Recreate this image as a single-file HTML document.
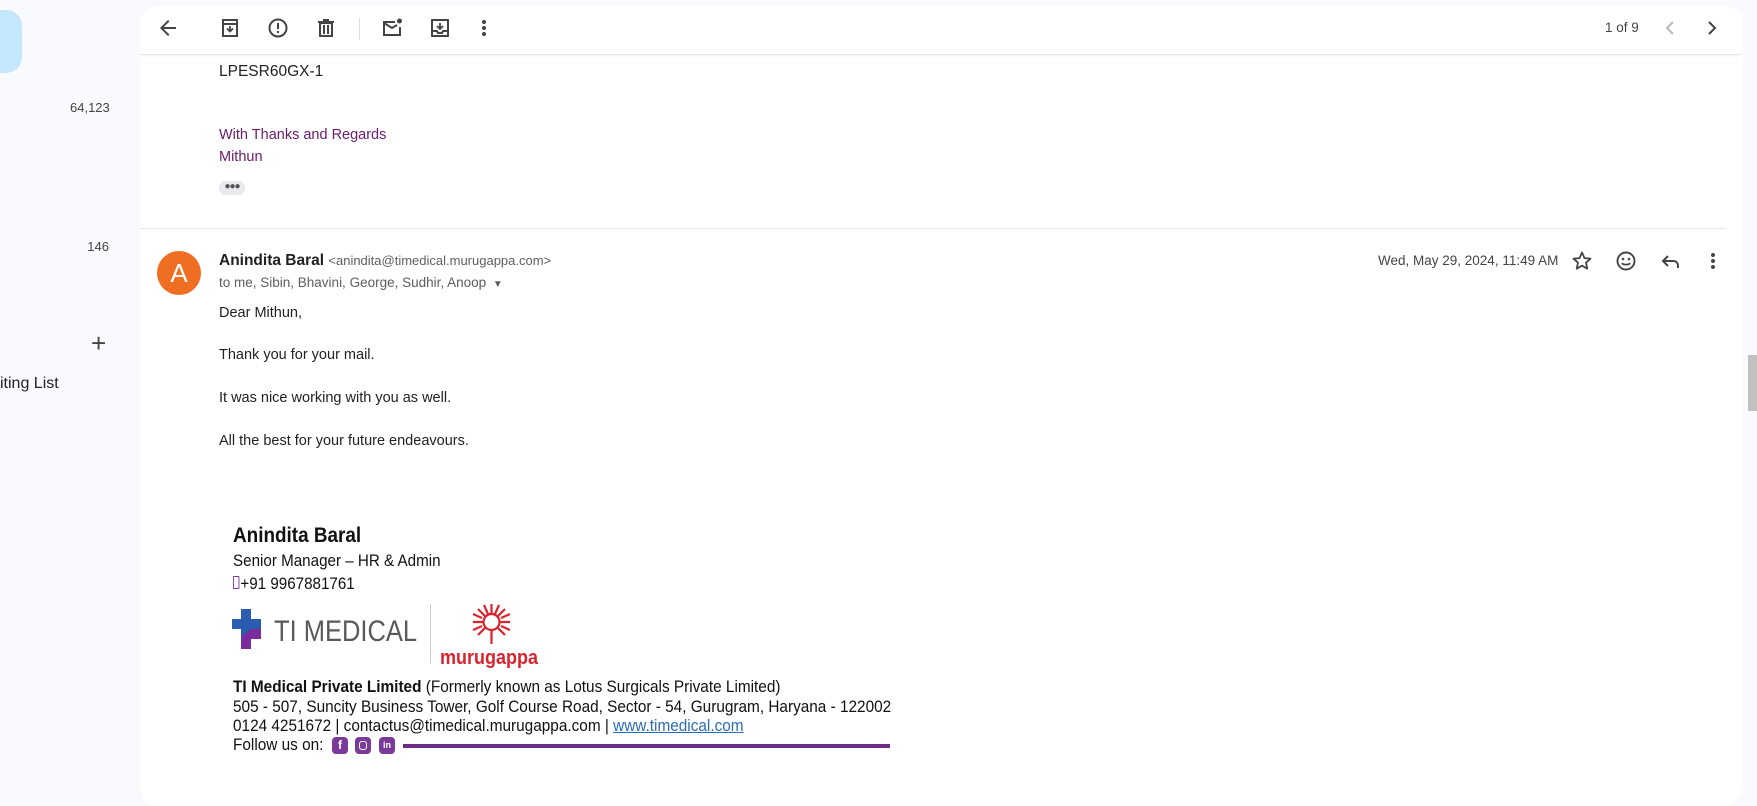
<!DOCTYPE html>
<html><head><meta charset="utf-8"><style>
*{margin:0;padding:0;box-sizing:border-box}
body{width:1757px;height:780px;background:#f8fafd;font-family:"Liberation Sans",Arial,sans-serif;position:relative;overflow:hidden;color:#222}
.a{position:absolute;white-space:nowrap}
.card{position:absolute;left:140px;top:6px;width:1603px;height:800px;background:#fff;border-radius:18px}
.ic{position:absolute;width:24px;height:24px}
.sig{font-family:"Liberation Sans",sans-serif;color:#111;transform-origin:0 0;transform:scaleX(0.93)}
</style></head><body>
<div class="a" style="left:-20px;top:10px;width:42px;height:63px;background:#c2e7ff;border-radius:16px"></div>
<div class="a" style="left:70px;top:100px;font-size:13px;color:#444;width:39px;text-align:right">64,123</div>
<div class="a" style="left:70px;top:239px;font-size:13px;color:#444;width:39px;text-align:right">146</div>
<div class="a" style="left:91px;top:328px;font-size:26px;color:#444;font-weight:300">+</div>
<div class="a" style="left:0;top:375px;font-size:16px;color:#222">iting List</div>
<div class="card"></div>
<div class="a" style="left:219px;top:41px;font-size:15.5px;color:#222">LPESR60GX-0</div>
<div class="a" style="left:140px;top:6px;width:1601px;height:48px;background:#fff;border-radius:18px 18px 0 0"></div>
<div class="a" style="left:140px;top:54px;width:1601px;height:1px;background:#e6e6e6;box-shadow:0 1px 2px rgba(0,0,0,.06)"></div>
<svg class="ic" style="left:156px;top:16px" viewBox="0 0 24 24"><path d="M20 11H7.8l5.6-5.6L12 4l-8 8 8 8 1.4-1.4L7.8 13H20z" fill="#444"/></svg>
<svg class="ic" style="left:218px;top:16px" viewBox="0 0 24 24"><path d="M5 4h14v16H5z M5 8h14" fill="none" stroke="#444" stroke-width="2"/><path d="M12 10v5m-3-2.5l3 3 3-3" fill="none" stroke="#444" stroke-width="1.8"/></svg>
<svg class="ic" style="left:266px;top:16px" viewBox="0 0 24 24"><circle cx="12" cy="12" r="8.5" fill="none" stroke="#444" stroke-width="2"/><path d="M12 7v6" stroke="#444" stroke-width="2"/><circle cx="12" cy="16" r="1.2" fill="#444"/></svg>
<svg class="ic" style="left:314px;top:16px" viewBox="0 0 24 24"><path d="M6 7h12v13H6z M4 6h16 M9 4h6 M10 9v9 M14 9v9" fill="none" stroke="#444" stroke-width="2"/></svg>
<div class="a" style="left:359px;top:18px;width:1px;height:22px;background:#ddd"></div>
<svg class="ic" style="left:380px;top:16px" viewBox="0 0 24 24"><path d="M15 6H4v13h16v-8" fill="none" stroke="#444" stroke-width="2"/><path d="M4 7l8 5 5-3" fill="none" stroke="#444" stroke-width="2"/><circle cx="19.5" cy="5" r="2.5" fill="#444"/></svg>
<svg class="ic" style="left:428px;top:16px" viewBox="0 0 24 24"><path d="M4 4h16v16H4z M4 15h5l1 2h4l1-2h5" fill="none" stroke="#444" stroke-width="2"/><path d="M12 7v6m-3-3l3 3 3-3" fill="none" stroke="#444" stroke-width="1.8"/></svg>
<svg class="ic" style="left:472px;top:16px" viewBox="0 0 24 24"><circle cx="12" cy="6" r="2" fill="#444"/><circle cx="12" cy="12" r="2" fill="#444"/><circle cx="12" cy="18" r="2" fill="#444"/></svg>
<div class="a" style="left:1605px;top:20px;font-size:13.5px;color:#444">1 of 9</div>
<svg class="ic" style="left:1658px;top:16px" viewBox="0 0 24 24"><path d="M15 6l-6 6 6 6" fill="none" stroke="#bbb" stroke-width="2"/></svg>
<svg class="ic" style="left:1700px;top:16px" viewBox="0 0 24 24"><path d="M9 6l6 6-6 6" fill="none" stroke="#444" stroke-width="2"/></svg>
<div class="a" style="left:219px;top:63px;font-size:15.5px;color:#222">LPESR60GX-1</div>
<div class="a" style="left:219px;top:127px;font-size:14.5px;color:#6a1b6a">With Thanks and Regards</div>
<div class="a" style="left:219px;top:149px;font-size:14.5px;color:#6a1b6a">Mithun</div>
<div class="a" style="left:219px;top:181px;width:26px;height:14px;background:#e8eaed;border-radius:7px;font-size:10px;color:#555;text-align:center;line-height:12px;letter-spacing:-1px">●●●</div>
<div class="a" style="left:140px;top:228px;width:1586px;height:1px;background:#e5e7ea"></div>
<div class="a" style="left:157px;top:251px;width:44px;height:44px;border-radius:50%;background:#f06e22;color:#fff;font-size:26px;text-align:center;line-height:44px">A</div>
<div class="a" style="left:219px;top:252px;font-size:15.5px"><b style="color:#1f1f1f">Anindita Baral</b> <span style="font-size:13px;color:#5e5e5e">&lt;anindita@timedical.murugappa.com&gt;</span></div>
<div class="a" style="left:219px;top:275px;font-size:13.5px;color:#5e5e5e">to me, Sibin, Bhavini, George, Sudhir, Anoop <span style="font-size:10px;margin-left:3px">▼</span></div>
<div class="a" style="left:1378px;top:253px;font-size:13.5px;color:#444;width:172px;text-align:right">Wed, May 29, 2024, 11:49 AM</div>
<svg class="ic" style="left:1570px;top:249px" viewBox="0 0 24 24"><path d="M12 3.5l2.5 5.6 6 .6-4.5 4 1.3 6-5.3-3.1-5.3 3.1 1.3-6-4.5-4 6-.6z" fill="none" stroke="#444" stroke-width="1.8" stroke-linejoin="round"/></svg>
<svg class="ic" style="left:1614px;top:249px" viewBox="0 0 24 24"><circle cx="12" cy="12" r="8.5" fill="none" stroke="#444" stroke-width="1.9"/><circle cx="9" cy="10" r="1.3" fill="#444"/><circle cx="15" cy="10" r="1.3" fill="#444"/><path d="M8 14c1 2.2 7 2.2 8 0" fill="none" stroke="#444" stroke-width="1.8"/></svg>
<svg class="ic" style="left:1659px;top:249px" viewBox="0 0 24 24"><path d="M9 7l-5 5 5 5 M4 12h10c3 0 5 2 5 5v2" fill="none" stroke="#444" stroke-width="2"/></svg>
<svg class="ic" style="left:1701px;top:249px" viewBox="0 0 24 24"><circle cx="12" cy="6" r="2" fill="#444"/><circle cx="12" cy="12" r="2" fill="#444"/><circle cx="12" cy="18" r="2" fill="#444"/></svg>
<div class="a" style="left:219px;top:305px;font-size:14.5px;color:#222">Dear Mithun,</div>
<div class="a" style="left:219px;top:347px;font-size:14.5px;color:#222">Thank you for your mail.</div>
<div class="a" style="left:219px;top:390px;font-size:14.5px;color:#222">It was nice working with you as well.</div>
<div class="a" style="left:219px;top:433px;font-size:14.5px;color:#222">All the best for your future endeavours.</div>
<div class="a sig" style="left:233px;top:524px;font-size:21px;font-weight:bold;transform:scaleX(0.9)">Anindita Baral</div>
<div class="a sig" style="left:233px;top:552px;font-size:16.5px;transform:scaleX(0.92)">Senior Manager – HR &amp; Admin</div>
<div class="a sig" style="left:233px;top:575px;font-size:16.5px;transform:scaleX(0.92)"><span style="display:inline-block;width:7px;height:13px;border:1.5px solid #7a3a9a;border-radius:1px;margin-right:1px"></span>+91 9967881761</div>
<svg class="a" style="left:232px;top:607px" width="29" height="42" viewBox="0 0 29 42"><path d="M9 2h10v10H29v10H19v8l-10 8V22H0V12h9z" fill="#2a5db0"/><path d="M19 22h10v10H19v10H9V30z" fill="#7a2c9e"/></svg>
<div class="a" style="left:274px;top:615px;font-size:30px;color:#58595b;transform-origin:0 0;transform:scaleX(0.85)">TI MEDICAL</div>
<div class="a" style="left:430px;top:604px;width:1px;height:60px;background:#ccc"></div>
<svg class="a" style="left:470px;top:602px" width="43" height="44" viewBox="0 0 43 44"><g stroke="#d9232e" stroke-width="2.2" fill="none"><circle cx="21.5" cy="20" r="8"/><path d="M21.5 2v10M21.5 28v14M3 20h10M30 20h10M8 7l7 7M35 7l-7 7M8 33l7-7M35 33l-7-7M14 3l4 9M29 3l-4 9M3 12l9 4M40 12l-9 4M3 28l9-4M40 28l-9-4"/></g></svg>
<div class="a" style="left:440px;top:647px;font-size:20px;color:#d9232e;font-weight:bold;transform-origin:0 0;transform:scaleX(0.9)">murugappa</div>
<div class="a sig" style="left:233px;top:678px;font-size:16.5px"><b>TI Medical Private Limited</b> (Formerly known as Lotus Surgicals Private Limited)</div>
<div class="a sig" style="left:233px;top:698px;font-size:16.5px">505 - 507, Suncity Business Tower, Golf Course Road, Sector - 54, Gurugram, Haryana - 122002</div>
<div class="a sig" style="left:233px;top:717px;font-size:16.5px">0124 4251672 | contactus@timedical.murugappa.com | <span style="color:#2a6db5;text-decoration:underline">www.timedical.com</span></div>
<div class="a sig" style="left:233px;top:736px;font-size:16.5px">Follow us on:</div>
<div class="a" style="left:332px;top:737px;width:16px;height:17px;background:#7a3a9a;border-radius:4px;color:#fff;font-size:12px;font-weight:bold;text-align:center;line-height:17px">f</div>
<div class="a" style="left:355px;top:737px;width:16px;height:17px;background:#7a3a9a;border-radius:4px"><div style="margin:4px;width:8px;height:9px;border:1.5px solid #fff;border-radius:3px"></div></div>
<div class="a" style="left:379px;top:737px;width:16px;height:17px;background:#7a3a9a;border-radius:4px;color:#fff;font-size:9px;font-weight:bold;text-align:center;line-height:17px">in</div>
<div class="a" style="left:403px;top:744px;width:487px;height:4px;background:#6a2e8a"></div>
<div class="a" style="left:1748px;top:355px;width:9px;height:56px;background:#c1c1c1"></div>
</body></html>
